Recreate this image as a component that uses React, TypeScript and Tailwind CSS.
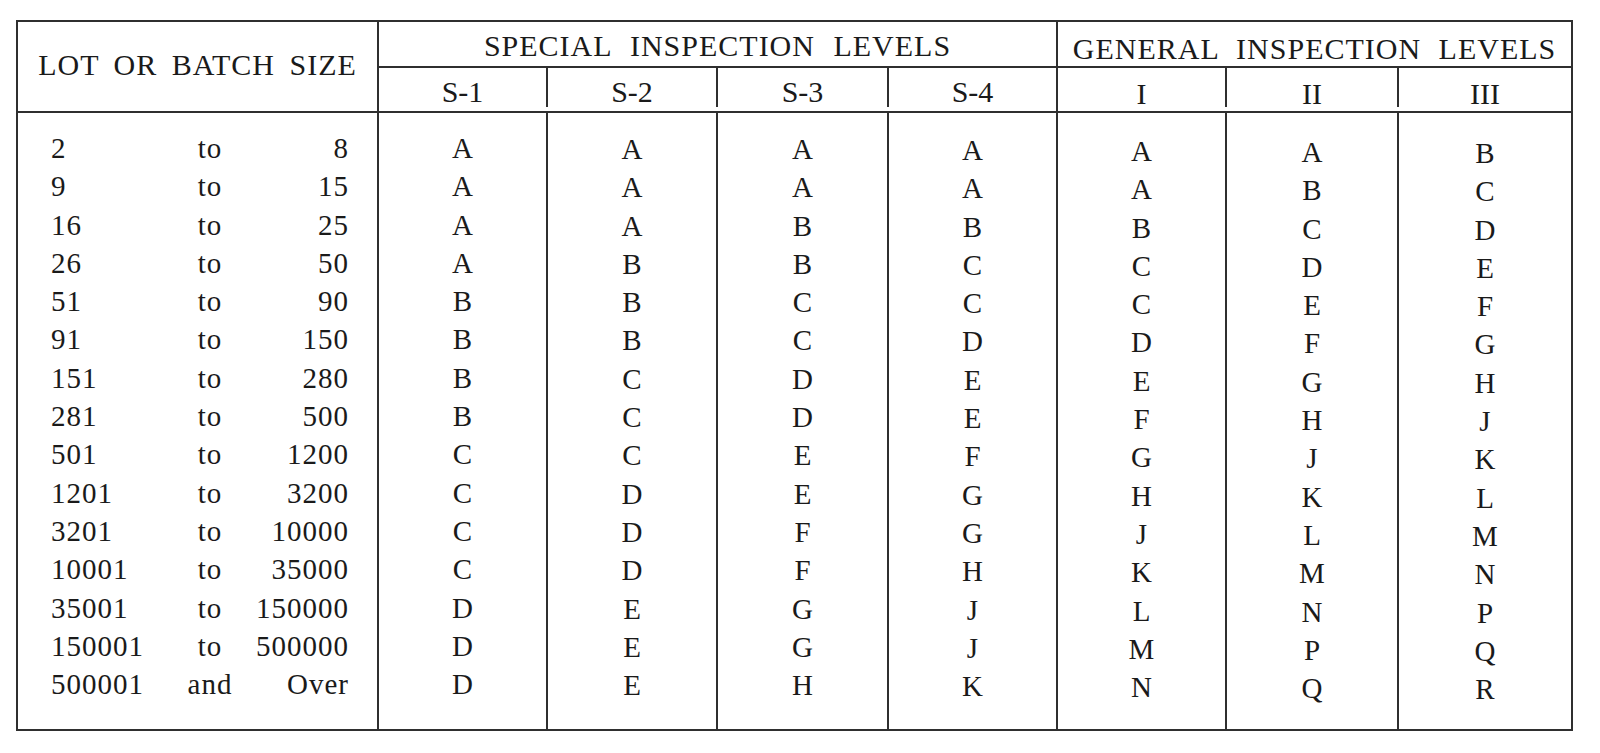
const rows: [string, string, string, string[]][] = [
  ['2', 'to', '8', ['A', 'A', 'A', 'A', 'A', 'A', 'B']],
  ['9', 'to', '15', ['A', 'A', 'A', 'A', 'A', 'B', 'C']],
  ['16', 'to', '25', ['A', 'A', 'B', 'B', 'B', 'C', 'D']],
  ['26', 'to', '50', ['A', 'B', 'B', 'C', 'C', 'D', 'E']],
  ['51', 'to', '90', ['B', 'B', 'C', 'C', 'C', 'E', 'F']],
  ['91', 'to', '150', ['B', 'B', 'C', 'D', 'D', 'F', 'G']],
  ['151', 'to', '280', ['B', 'C', 'D', 'E', 'E', 'G', 'H']],
  ['281', 'to', '500', ['B', 'C', 'D', 'E', 'F', 'H', 'J']],
  ['501', 'to', '1200', ['C', 'C', 'E', 'F', 'G', 'J', 'K']],
  ['1201', 'to', '3200', ['C', 'D', 'E', 'G', 'H', 'K', 'L']],
  ['3201', 'to', '10000', ['C', 'D', 'F', 'G', 'J', 'L', 'M']],
  ['10001', 'to', '35000', ['C', 'D', 'F', 'H', 'K', 'M', 'N']],
  ['35001', 'to', '150000', ['D', 'E', 'G', 'J', 'L', 'N', 'P']],
  ['150001', 'to', '500000', ['D', 'E', 'G', 'J', 'M', 'P', 'Q']],
  ['500001', 'and', 'Over', ['D', 'E', 'H', 'K', 'N', 'Q', 'R']],
]

// content widths of the code letter columns; each carries a 2px left rule (box-content)
// pt is a small per-column nudge, the scan sits a little lower towards the right
const letterCols = [
  { w: 'w-[167px]', pt: 'pt-[16px]', label: 'S-1' },
  { w: 'w-[168px]', pt: 'pt-[17px]', label: 'S-2' },
  { w: 'w-[169px]', pt: 'pt-[17px]', label: 'S-3' },
  { w: 'w-[167px]', pt: 'pt-[18px]', label: 'S-4' },
  { w: 'w-[167px]', pt: 'pt-[19px]', label: 'I' },
  { w: 'w-[170px]', pt: 'pt-[20px]', label: 'II' },
  { w: 'w-[172px]', pt: 'pt-[21px]', label: 'III' },
]

const rule = 'border-[#2f2f2f]'

export default function App() {
  return (
    <div className="bg-white pt-[20px] pl-[16px] pb-[26px] text-[#1a1a1a]"
      style={{ fontFamily: '"Liberation Serif", "Times New Roman", serif' }}>
      <div className={`w-fit border-2 ${rule}`}>

        {/* Header */}
        <div className={`flex border-b-2 ${rule}`}>
          <div className="box-content flex h-[85px] w-[359px] items-center justify-center pb-[4px] text-[30px] tracking-[1px] [word-spacing:6px]">
            LOT OR BATCH SIZE
          </div>
          <div className={`box-content w-[677px] border-l-2 ${rule}`}>
            <div className={`flex h-[46px] items-center justify-center border-b-2 ${rule} pt-[2px] text-[30px] tracking-[1px] [word-spacing:10px]`}>
              SPECIAL INSPECTION LEVELS
            </div>
            <div className="flex h-[39px]">
              {letterCols.slice(0, 4).map((c, i) => (
                <div key={c.label}
                  className={`${c.w} box-content flex items-center justify-center pt-[8px] text-[30px] ${i > 0 ? `border-l-2 ${rule}` : ''}`}>
                  {c.label}
                </div>
              ))}
            </div>
          </div>
          <div className={`box-content w-[513px] border-l-2 ${rule}`}>
            <div className={`flex h-[46px] items-center justify-center border-b-2 ${rule} pt-[9px] text-[30px] tracking-[1px] [word-spacing:9px]`}>
              GENERAL INSPECTION LEVELS
            </div>
            <div className="flex h-[39px]">
              {letterCols.slice(4).map((c, i) => (
                <div key={c.label}
                  className={`${c.w} box-content flex items-center justify-center pt-[12px] text-[30px] ${i > 0 ? `border-l-2 ${rule}` : ''}`}>
                  {c.label}
                </div>
              ))}
            </div>
          </div>
        </div>

        {/* Body */}
        <div className="flex h-[616px]">
          <div className="box-content w-[298px] pt-[16px] pl-[33px] pr-[28px] text-[29px] tracking-[1px]">
            {rows.map(r => (
              <div key={r[0]} className="grid h-[38.3px] grid-cols-[129px_60px_1fr] items-center leading-[38.3px]">
                <span>{r[0]}</span>
                <span className="text-center">{r[1]}</span>
                <span className="text-right">{r[2]}</span>
              </div>
            ))}
          </div>
          {letterCols.map((c, ci) => (
            <div key={c.label} className={`${c.w} ${c.pt} box-content border-l-2 ${rule} text-[29px]`}>
              {rows.map(r => (
                <div key={r[0]} className="h-[38.3px] text-center leading-[38.3px]">
                  {r[3][ci]}
                </div>
              ))}
            </div>
          ))}
        </div>

      </div>
    </div>
  )
}
